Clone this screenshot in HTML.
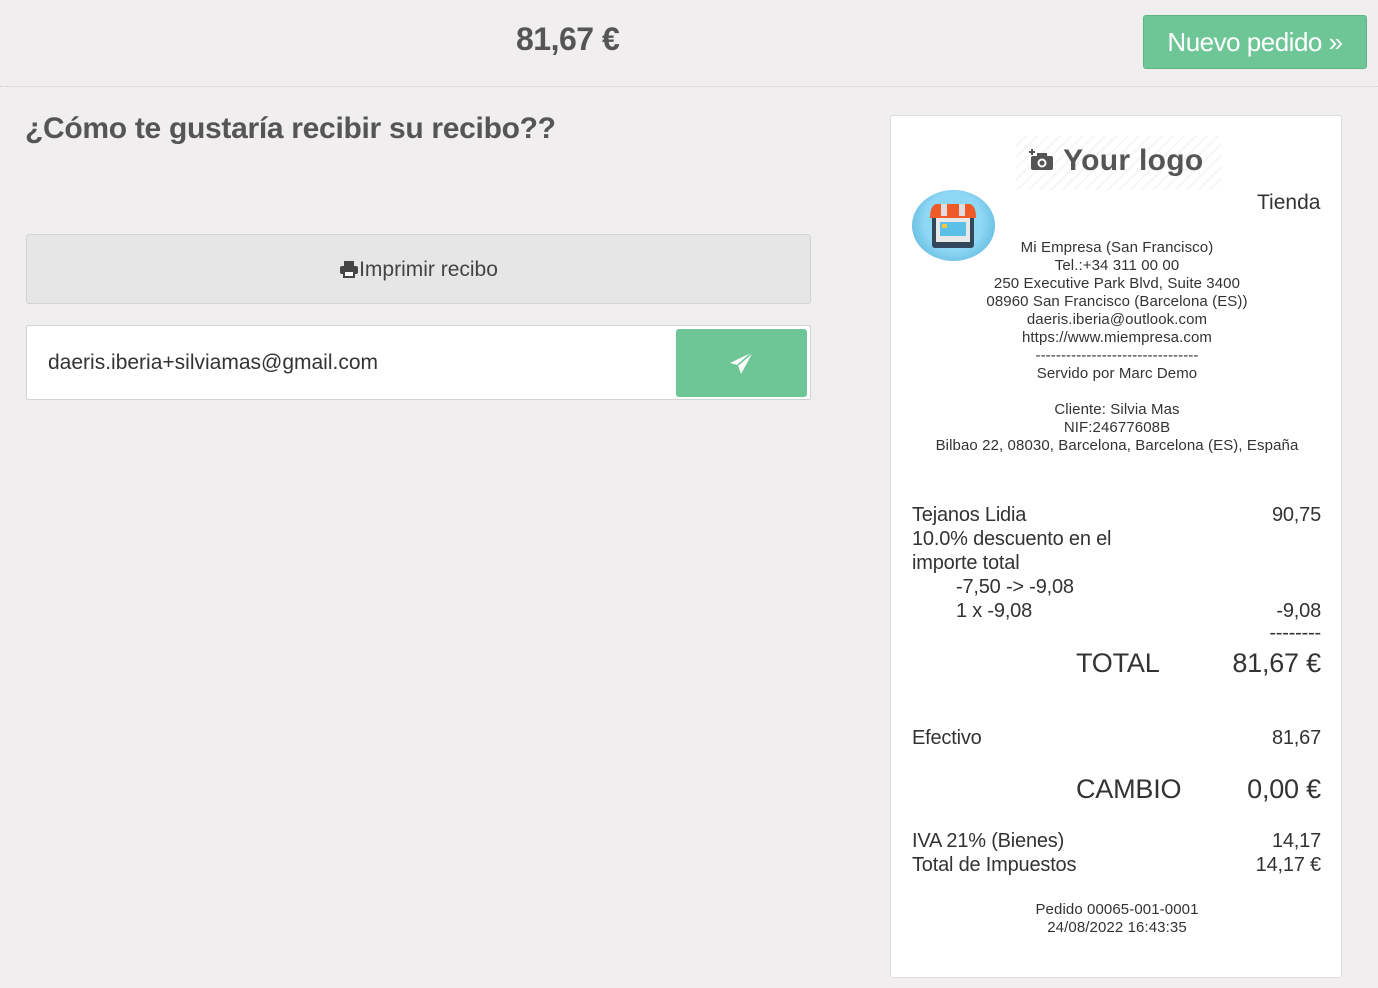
<!DOCTYPE html>
<html><head><meta charset="utf-8"><style>
*{margin:0;padding:0;box-sizing:border-box}
body{width:1378px;height:988px;background:#f0eeee;font-family:"Liberation Sans",sans-serif;color:#444;position:relative;overflow:hidden}
.a{position:absolute;white-space:nowrap}
.r{position:absolute;left:890px;top:115px;width:452px;height:863px;background:#fff;border:1px solid #ddd;border-radius:3px}
.c{position:absolute;left:0;width:452px;text-align:center;font-size:15px;line-height:18px;color:#333;letter-spacing:0.1px}
.t{position:absolute;font-size:20px;color:#333;letter-spacing:-0.2px;white-space:nowrap;line-height:24px}
.rt{text-align:right}
</style></head><body>
<div class="a" style="left:516px;top:21px;font-size:32px;font-weight:bold;color:#555;letter-spacing:-0.5px">81,67 €</div>
<div class="a" style="left:1143px;top:15px;width:224px;height:54px;background:#6ec697;border:1px solid #5cb585;border-radius:3px;color:#fff;font-size:26px;line-height:52px;text-align:center;letter-spacing:-0.5px">Nuevo pedido »</div>
<div class="a" style="left:0;top:86px;width:1378px;border-top:1px dotted #ccc"></div>
<div class="a" style="left:25px;top:112px;font-size:30px;font-weight:bold;color:#555;letter-spacing:-0.3px">¿Cómo te gustaría recibir su recibo??</div>
<div class="a" style="left:26px;top:234px;width:785px;height:70px;background:#e6e6e6;border:1px solid #d3d3d3;border-radius:3px;text-align:center;line-height:70px;font-size:21px;color:#444;letter-spacing:0px">
<svg width="20" height="18" viewBox="0 0 20 18" style="vertical-align:-2px"><rect x="5" y="1" width="10" height="6" fill="#444"/><rect x="1" y="6" width="18" height="8" rx="2" fill="#444"/><rect x="5" y="11" width="10" height="6" fill="#fff" stroke="#444" stroke-width="2"/></svg>Imprimir recibo</div>
<div class="a" style="left:26px;top:325px;width:785px;height:75px;background:#fff;border:1px solid #d3d3d3;border-radius:2px"></div>
<div class="a" style="left:48px;top:351px;font-size:21px;color:#333;letter-spacing:0px">daeris.iberia+silviamas@gmail.com</div>
<div class="a" style="left:676px;top:329px;width:131px;height:68px;background:#6ec697;border-radius:3px"><svg style="position:absolute;left:53px;top:22px" width="26" height="24" viewBox="0 0 26 24"><path d="M24 1L1 12l8 2 3 9 12-22z" fill="#fff"/><path d="M9 14l15-13" stroke="#6ec697" stroke-width="1.6"/></svg></div>
<div class="r">
<div class="a" style="left:125px;top:20px;width:205px;height:54px;background:repeating-linear-gradient(135deg,#fff 0 6px,#f6f6f6 6px 8px)"></div>
<div class="a" style="left:138px;top:28px;font-size:30px;font-weight:bold;color:#555;letter-spacing:0.3px"><svg width="26" height="24" viewBox="0 0 26 24" style="vertical-align:-1px"><path d="M3 2v6M0 5h6" stroke="#555" stroke-width="2"/><rect x="2" y="9" width="22" height="14" rx="2" fill="#555"/><rect x="8" y="6" width="10" height="4" fill="#555"/><circle cx="13" cy="16" r="4.5" fill="#fff"/><circle cx="13" cy="16" r="2.5" fill="#555"/></svg> Your logo</div>
<div class="a" style="left:366px;top:75px;font-size:21px;color:#333">Tienda</div>
<div class="a" style="left:21px;top:74px;width:83px;height:71px;border-radius:50%;background:radial-gradient(circle at 50% 45%,#8fd8f5 50%,#4aa8d0 100%)">
<svg style="position:absolute;left:18px;top:12px" width="46" height="48" viewBox="0 0 46 48"><rect x="2" y="4" width="42" height="42" rx="3" fill="#33475b"/><rect x="6" y="14" width="34" height="26" fill="#e8e8e8"/><rect x="10" y="20" width="26" height="14" fill="#5bc0e8"/><rect x="12" y="22" width="5" height="4" fill="#f5c542"/><path d="M0 16q0-12 6-14h34q6 2 6 14" fill="#f05a28"/><rect x="11" y="2" width="6" height="12" fill="#ddd"/><rect x="29" y="2" width="6" height="12" fill="#ddd"/></svg></div>
<div class="c" style="top:123px">Mi Empresa (San Francisco)<br>Tel.:+34 311 00 00<br>250 Executive Park Blvd, Suite 3400<br>08960 San Francisco (Barcelona (ES))<br>daeris.iberia@outlook.com<br>https://www.miempresa.com<br>--------------------------------<br>Servido por Marc Demo<br><br>Cliente: Silvia Mas<br>NIF:24677608B<br>Bilbao 22, 08030, Barcelona, Barcelona (ES), España</div>
<div class="t" style="left:21px;top:387px">Tejanos Lidia<br>10.0% descuento en el<br>importe total</div>
<div class="t rt" style="right:20px;top:387px">90,75</div>
<div class="t" style="left:65px;top:459px">-7,50 -&gt; -9,08<br>1 x -9,08</div>
<div class="t rt" style="right:20px;top:483px">-9,08</div>
<div class="t rt" style="right:20px;top:505px">--------</div>
<div class="t" style="left:185px;top:532px;font-size:27px;line-height:30px">TOTAL</div>
<div class="t rt" style="right:20px;top:532px;font-size:27px;line-height:30px">81,67 €</div>
<div class="t" style="left:21px;top:610px">Efectivo</div>
<div class="t rt" style="right:20px;top:610px">81,67</div>
<div class="t" style="left:185px;top:658px;font-size:27px;line-height:30px">CAMBIO</div>
<div class="t rt" style="right:20px;top:658px;font-size:27px;line-height:30px">0,00 €</div>
<div class="t" style="left:21px;top:713px">IVA 21% (Bienes)<br>Total de Impuestos</div>
<div class="t rt" style="right:20px;top:713px">14,17<br>14,17 €</div>
<div class="c" style="top:785px">Pedido 00065-001-0001<br>24/08/2022 16:43:35</div>
</div>
</body></html>
